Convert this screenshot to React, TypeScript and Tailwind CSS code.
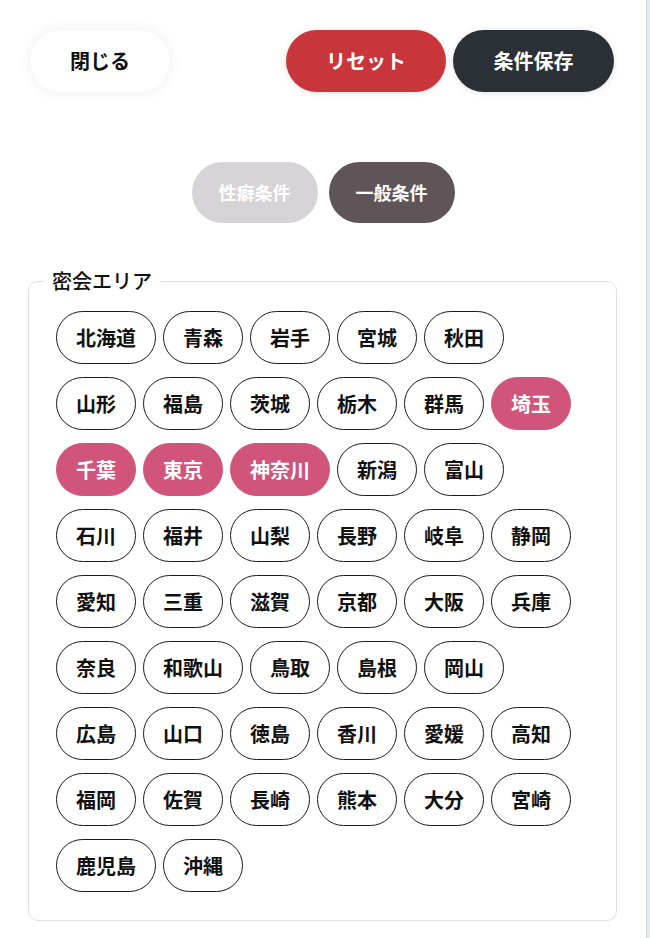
const rows: string[][] = [
  ["北海道", "青森", "岩手", "宮城", "秋田"],
  ["山形", "福島", "茨城", "栃木", "群馬", "埼玉"],
  ["千葉", "東京", "神奈川", "新潟", "富山"],
  ["石川", "福井", "山梨", "長野", "岐阜", "静岡"],
  ["愛知", "三重", "滋賀", "京都", "大阪", "兵庫"],
  ["奈良", "和歌山", "鳥取", "島根", "岡山"],
  ["広島", "山口", "徳島", "香川", "愛媛", "高知"],
  ["福岡", "佐賀", "長崎", "熊本", "大分", "宮崎"],
  ["鹿児島", "沖縄"],
];

const selected = new Set(["埼玉", "千葉", "東京", "神奈川"]);

function Chip({ label }: { label: string }) {
  const on = selected.has(label);
  return (
    <button
      className={
        on
          ? "h-[53px] px-[19px] rounded-full bg-[#d1547a] border-[1.5px] border-[#d1547a] text-white text-[20px] font-bold leading-none"
          : "h-[53px] px-[19px] rounded-full bg-white border-[1.5px] border-[#1a1a1a] text-[#111] text-[20px] font-bold leading-none"
      }
    >
      {label}
    </button>
  );
}

export default function App() {
  return (
    <div
      className="flex w-[650px] h-[938px] overflow-hidden bg-white"
      style={{ fontFamily: '"Noto Sans CJK JP", "Noto Sans", sans-serif' }}
    >
      <div className="flex-1">
        <div className="flex justify-between pt-[30px] pl-[30px] pr-[32px]">
          <button className="w-[140px] h-[62px] rounded-full bg-white shadow-[0_0_14px_rgba(0,0,0,0.07)] text-[20px] font-bold text-[#111]">
            閉じる
          </button>
          <div className="flex gap-[7px]">
            <button className="w-[160px] h-[62px] rounded-full bg-[#c8353a] shadow-[0_1px_6px_rgba(0,0,0,0.12)] text-[20px] font-bold text-white">
              リセット
            </button>
            <button className="w-[161px] h-[62px] rounded-full bg-[#2a3035] shadow-[0_1px_6px_rgba(0,0,0,0.12)] text-[20px] font-bold text-white">
              条件保存
            </button>
          </div>
        </div>

        <div className="flex justify-center gap-[11px] mt-[70px]">
          <button className="w-[126px] h-[61px] rounded-full bg-[#d6d4d6] text-[18px] font-bold text-white">
            性癖条件
          </button>
          <button className="w-[126px] h-[61px] rounded-full bg-[#5f5458] text-[18px] font-bold text-white">
            一般条件
          </button>
        </div>

        <fieldset className="mt-[44px] ml-[28px] mr-[29px] border border-[#e0e0e0] rounded-[10px] px-[27px] pt-[16px] pb-[28px]">
          <legend className="-ml-[12px] px-2 text-[20px] font-medium text-[#111] leading-[28px]">
            密会エリア
          </legend>
          <div className="flex flex-col gap-[13px]">
            {rows.map((r, i) => (
              <div key={i} className="flex gap-[7px]">
                {r.map((p) => (
                  <Chip key={p} label={p} />
                ))}
              </div>
            ))}
          </div>
        </fieldset>

        <fieldset className="mt-[14px] ml-[28px] mr-[29px] border border-[#e0e0e0] rounded-[10px] px-[27px] pt-[14px] pb-[27px]">
          <legend className="-ml-[12px] px-2 text-[20px] font-medium text-[#111] leading-[28px]">
            年齢
          </legend>
          <div className="h-[60px]" />
        </fieldset>
      </div>
      <div className="w-[4px] border-l border-[#cfd6d9] bg-[#e4eaec]" />
    </div>
  );
}
